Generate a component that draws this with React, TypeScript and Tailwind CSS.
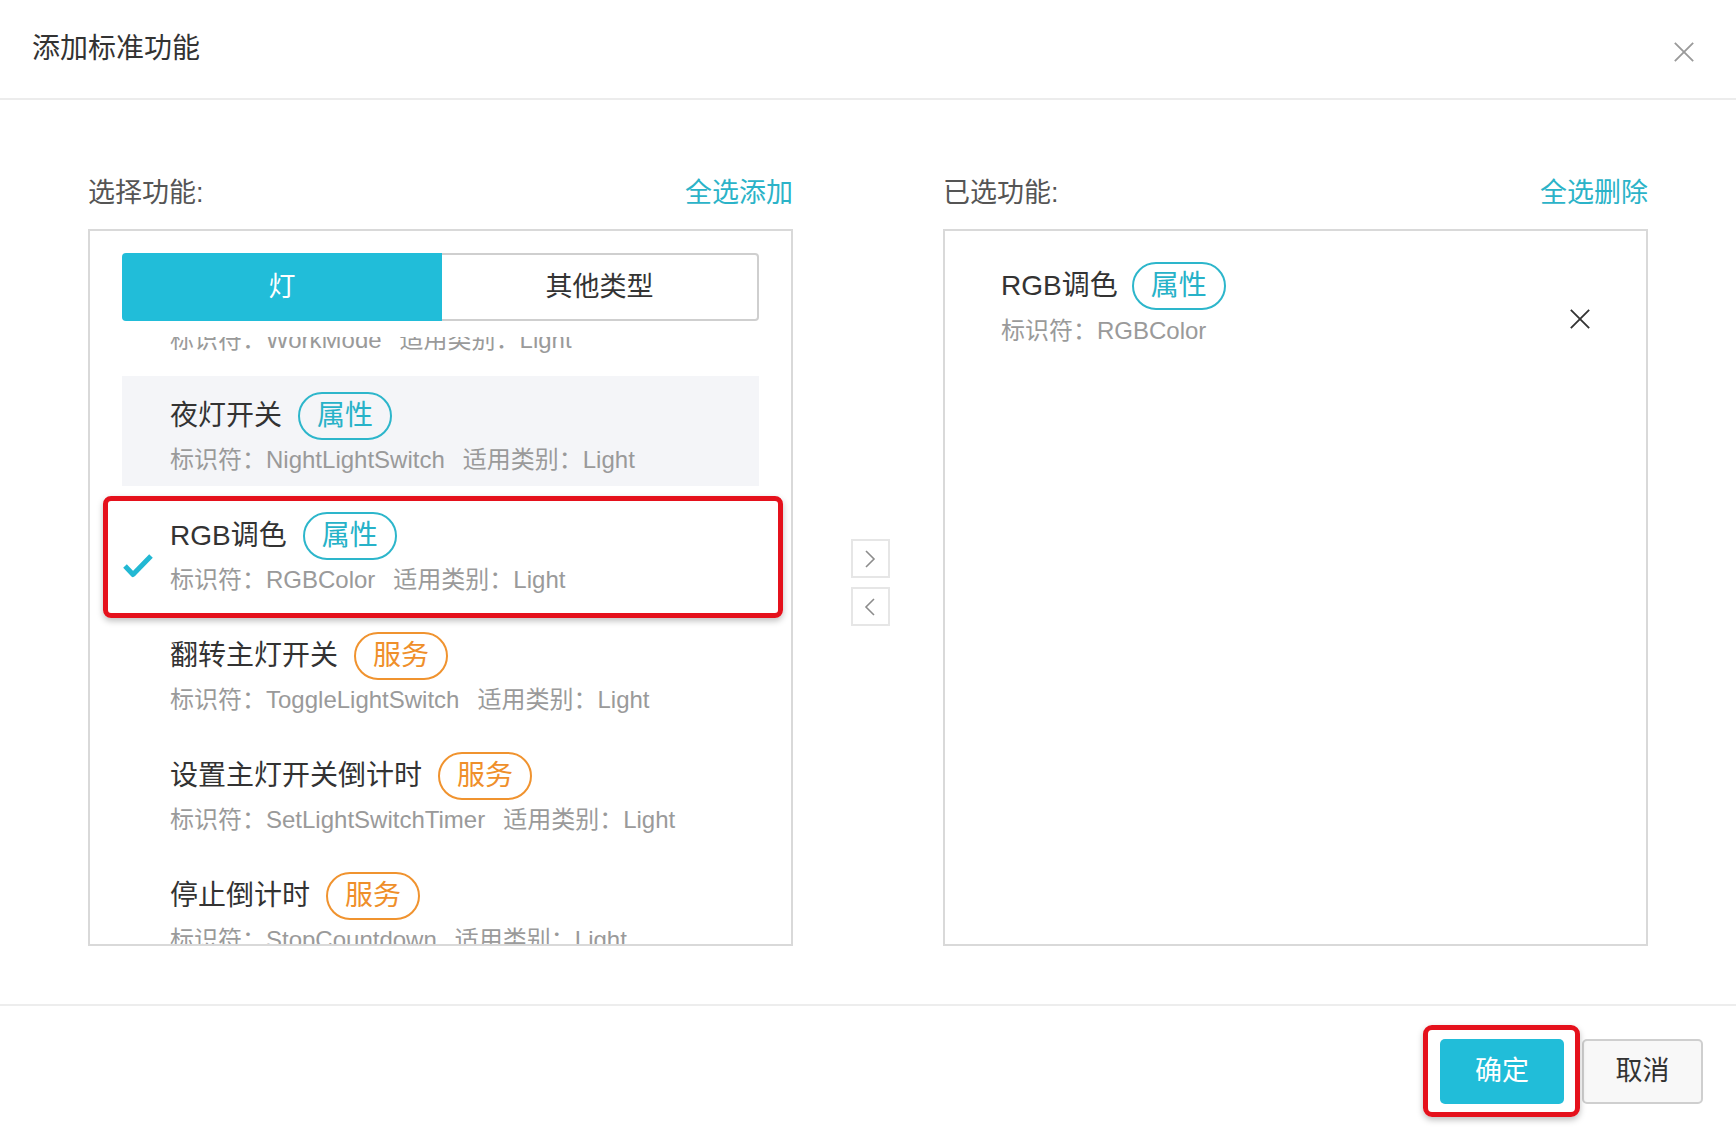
import React from 'react';

type Feature = {
  name: string;
  kind: 'prop' | 'service';
  id: string;
  hover?: boolean;
  checked?: boolean;
};

const features: Feature[] = [
  { name: '工作模式', kind: 'prop', id: 'WorkMode' },
  { name: '夜灯开关', kind: 'prop', id: 'NightLightSwitch', hover: true },
  { name: 'RGB调色', kind: 'prop', id: 'RGBColor', checked: true },
  { name: '翻转主灯开关', kind: 'service', id: 'ToggleLightSwitch' },
  { name: '设置主灯开关倒计时', kind: 'service', id: 'SetLightSwitchTimer' },
  { name: '停止倒计时', kind: 'service', id: 'StopCountdown' },
];

const Badge = ({ kind }: { kind: Feature['kind'] }) =>
  kind === 'prop' ? (
    <span className="inline-flex h-[48px] items-center rounded-full border-2 border-[#2db6cb] px-[17px] text-[28px] leading-none text-[#27b2c8]">
      属性
    </span>
  ) : (
    <span className="inline-flex h-[48px] items-center rounded-full border-2 border-[#f0932f] px-[17px] text-[28px] leading-none text-[#ef8f2a]">
      服务
    </span>
  );

const CloseIcon = ({ size, color, width }: { size: number; color: string; width: number }) => (
  <svg width={size} height={size} viewBox="0 0 24 24" fill="none">
    <path d="M2 2L22 22M22 2L2 22" stroke={color} strokeWidth={width} />
  </svg>
);

const FeatureRow = ({ f }: { f: Feature }) => (
  <div
    className={`relative mb-[10px] flex h-[110px] flex-col pl-[48px] pt-[16px] ${
      f.hover ? 'bg-[#f4f5f8]' : ''
    }`}
  >
    {/* check mark for the selected row */}
    {f.checked && (
      <svg className="absolute left-0 top-[56px]" width="32" height="27" viewBox="0 0 32 27" fill="none">
        <path d="M3 14L11 22.5L29 4" stroke="#22b8d3" strokeWidth="5" strokeLinejoin="round" />
      </svg>
    )}
    <div className="flex items-center gap-[16px]">
      <span className="text-[28px] leading-[48px] text-[#333]">{f.name}</span>
      <Badge kind={f.kind} />
    </div>
    <div className="mt-[5px] flex text-[24px] leading-[30px] text-[#9a9a9a]">
      <span>标识符：{f.id}</span>
      <span className="ml-[18px]">适用类别：Light</span>
    </div>
    {/* annotation frame */}
    {f.checked && (
      <div className="pointer-events-none absolute left-[-19px] top-[0px] h-[122px] w-[680px] rounded-[8px] border-[5px] border-[#e5111c] shadow-[0_3px_6px_rgba(0,0,0,0.25)]" />
    )}
  </div>
);

export default function App() {
  return (
    <div className="flex h-[1132px] w-[1736px] flex-col bg-white font-['Liberation_Sans','Noto_Sans_CJK_SC',sans-serif]">
      {/* header */}
      <div className="flex h-[100px] shrink-0 items-center justify-between border-b-2 border-[#ececec] pl-[32px] pr-[41px]">
        <h1 className="text-[28px] leading-[40px] text-[#333]">添加标准功能</h1>
        <div className="mt-[6px]">
          <CloseIcon size={22} color="#9a9a9a" width={2} />
        </div>
      </div>

      {/* body */}
      <div className="grid grid-cols-[705px_1fr_705px] px-[88px] pt-[73px]">
        <div className="mb-[16px] flex items-center justify-between text-[27px] leading-[40px]">
          <span className="text-[#555]">选择功能:</span>
          <span className="text-[#2bb3c8]">全选添加</span>
        </div>
        <div />
        <div className="mb-[16px] flex items-center justify-between text-[27px] leading-[40px]">
          <span className="text-[#555]">已选功能:</span>
          <span className="text-[#2bb3c8]">全选删除</span>
        </div>

        {/* left panel */}
        <div className="flex h-[717px] flex-col border-2 border-[#d9d9d9]">
          <div className="px-[32px] pb-[16px] pt-[22px]">
            <div className="flex h-[68px] text-[27px]">
              <div className="flex w-[320px] items-center justify-center rounded-l-[4px] bg-[#21bdd9] text-white">灯</div>
              <div className="flex flex-1 items-center justify-center rounded-r-[4px] border-2 border-l-0 border-[#cfcfcf] text-[#333]">
                其他类型
              </div>
            </div>
          </div>
          <div className="flex-1 overflow-hidden">
            <div className="mx-[32px] -mt-[81px]">
              {features.map((f) => (
                <FeatureRow key={f.id} f={f} />
              ))}
            </div>
          </div>
        </div>

        {/* transfer buttons */}
        <div className="flex flex-col items-center justify-center gap-[9px] pb-[10px] pl-[4px]">
          <button className="flex h-[39px] w-[39px] items-center justify-center border-2 border-[#e6e6e6] bg-white">
            <svg width="12" height="20" viewBox="0 0 12 20" fill="none">
              <path d="M2 2L10 10L2 18" stroke="#8c8c8c" strokeWidth="1.6" />
            </svg>
          </button>
          <button className="flex h-[39px] w-[39px] items-center justify-center border-2 border-[#e6e6e6] bg-white">
            <svg width="12" height="20" viewBox="0 0 12 20" fill="none">
              <path d="M10 2L2 10L10 18" stroke="#8c8c8c" strokeWidth="1.6" />
            </svg>
          </button>
        </div>

        {/* right panel */}
        <div className="h-[717px] border-2 border-[#d9d9d9]">
          <div className="flex items-center justify-between pl-[56px] pr-[55px] pt-[31px]">
            <div className="flex flex-col">
              <div className="flex items-center gap-[14px]">
                <span className="text-[28px] leading-[48px] text-[#333]">RGB调色</span>
                <Badge kind="prop" />
              </div>
              <span className="mt-[6px] text-[24px] leading-[30px] text-[#9a9a9a]">标识符：RGBColor</span>
            </div>
            <div className="mt-[30px]">
              <CloseIcon size={22} color="#333" width={2} />
            </div>
          </div>
        </div>
      </div>

      {/* footer */}
      <div className="mt-[58px] flex justify-end gap-[18px] border-t-2 border-[#ededed] pr-[33px] pt-[33px]">
        <div className="relative">
          <button className="h-[65px] w-[124px] rounded-[5px] bg-[#21bdd9] text-[27px] text-white">确定</button>
          <div className="pointer-events-none absolute -left-[17px] -top-[14px] h-[92px] w-[157px] rounded-[9px] border-[5px] border-[#e5111c] shadow-[0_3px_6px_rgba(0,0,0,0.25)]" />
        </div>
        <button className="h-[65px] w-[121px] rounded-[5px] border-2 border-[#cfcfcf] bg-[#f8f8f8] text-[27px] text-[#333]">
          取消
        </button>
      </div>
    </div>
  );
}
